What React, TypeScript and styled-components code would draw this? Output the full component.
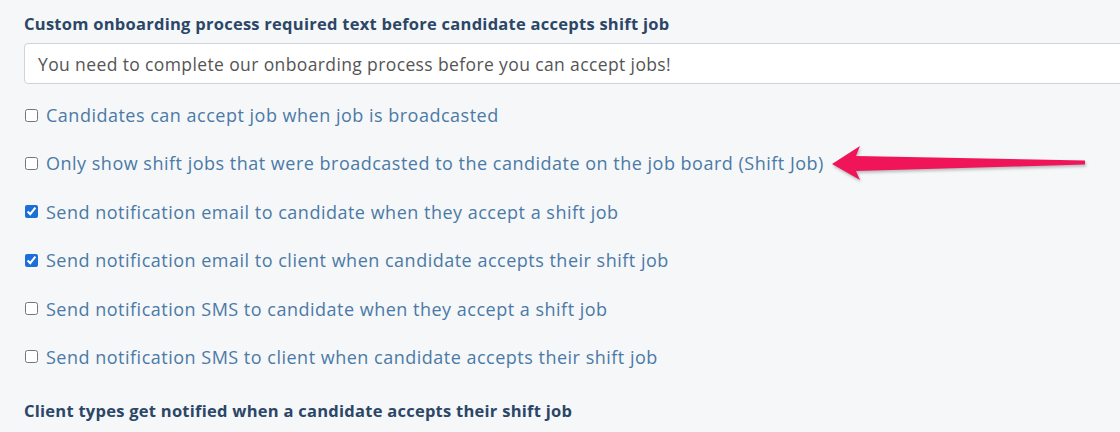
import styled, { createGlobalStyle } from 'styled-components'

const GlobalStyle = createGlobalStyle`
  html, body {
    margin: 0;
    padding: 0;
    background: #f5f7f9;
    overflow: hidden;
  }
  body {
    font-family: "Open Sans", "Noto Sans", sans-serif;
  }
`

const Page = styled.div`
  width: 1120px;
  height: 432px;
  padding: 12px 0 0 24px;
  box-sizing: border-box;
  overflow: hidden;
`

const Heading = styled.div<{ $gap?: number }>`
  font-size: 16.5px;
  line-height: 24px;
  font-weight: 700;
  color: #2b4666;
  letter-spacing: 0.26px;
  margin-top: ${(p) => p.$gap ?? 0}px;
  white-space: nowrap;
`

const TextInput = styled.input`
  display: block;
  margin-top: 7px;
  width: 1120px;
  height: 41px;
  box-sizing: border-box;
  border: 1px solid #ced4da;
  border-radius: 4px;
  background: #fff;
  padding: 0 13px;
  font-family: inherit;
  font-size: 17.5px;
  color: #555;
  letter-spacing: 0.38px;
  outline: none;
`

const CheckList = styled.div`
  display: flex;
  flex-direction: column;
  gap: 24.4px;
  margin-top: 19px;
`

const Row = styled.label`
  display: flex;
  align-items: center;
  height: 24px;
  gap: 8px;
  white-space: nowrap;
`

const Box = styled.input`
  width: 13px;
  height: 13px;
  margin: 0 0 0 1px;
  accent-color: #1a6fd8;
`

const RowText = styled.span`
  font-size: 18px;
  color: #4b7aa6;
  letter-spacing: 0.5px;
`

const Arrow = styled.svg`
  margin-left: -2px;
  flex: none;
  filter: drop-shadow(1px 2px 1.5px rgba(0, 0, 0, 0.25));
`

const options = [
  { text: 'Candidates can accept job when job is broadcasted', checked: false },
  {
    text: 'Only show shift jobs that were broadcasted to the candidate on the job board (Shift Job)',
    checked: false,
    arrow: true,
  },
  { text: 'Send notification email to candidate when they accept a shift job', checked: true },
  { text: 'Send notification email to client when candidate accepts their shift job', checked: true },
  { text: 'Send notification SMS to candidate when they accept a shift job', checked: false },
  { text: 'Send notification SMS to client when candidate accepts their shift job', checked: false },
]

function PointerArrow() {
  return (
    <Arrow width="262" height="36" viewBox="0 0 262 36">
      <path
        d="M2 19 L30 1 L26 11 L255 15.5 L255 19.5 L26 26 L30 35 Z"
        fill="#ef1558"
        strokeLinejoin="round"
      />
    </Arrow>
  )
}

export default function App() {
  return (
    <>
      <GlobalStyle />
      <Page>
        <Heading>Custom onboarding process required text before candidate accepts shift job</Heading>
        <TextInput
          readOnly
          value="You need to complete our onboarding process before you can accept jobs!"
        />
        <CheckList>
          {options.map((o) => (
            <Row key={o.text}>
              <Box type="checkbox" defaultChecked={o.checked} />
              <RowText>{o.text}</RowText>
              {o.arrow && <PointerArrow />}
            </Row>
          ))}
        </CheckList>
        <Heading $gap={30}>Client types get notified when a candidate accepts their shift job</Heading>
      </Page>
    </>
  )
}
